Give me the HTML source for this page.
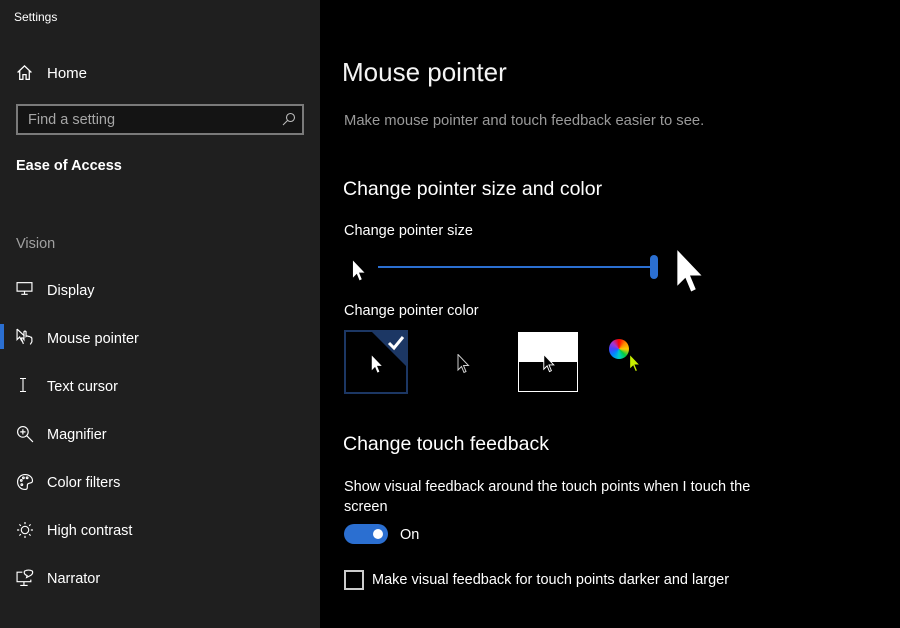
<!DOCTYPE html>
<html><head><meta charset="utf-8"><style>
*{margin:0;padding:0;box-sizing:border-box}
body{width:900px;height:628px;background:#000;font-family:"Liberation Sans",sans-serif;color:#fff;position:relative;overflow:hidden}
.side{position:absolute;left:0;top:0;width:320px;height:628px;background:#1f1f1f}
.a{position:absolute;white-space:nowrap}
.nav{position:absolute;left:47px;font-size:14.5px}
.ic{position:absolute;left:16px}
</style></head><body>
<div class="side">
<div class="a" style="left:14px;top:10px;font-size:12px">Settings</div>
<svg class="ic" style="top:64px" width="17" height="17" viewBox="0 0 16 16" fill="none" stroke="#fff" stroke-width="1.2"><path d="M1.5 8 L8 1.8 L14.5 8 M3.5 6.2 V14.5 H6.5 V10 H9.5 V14.5 H12.5 V6.2"/></svg>
<div class="nav" style="top:65px;font-size:15px">Home</div>
<div class="a" style="left:16px;top:104px;width:288px;height:31px;border:2px solid #7a7a7a;background:#141414"></div>
<div class="a" style="left:28px;top:112px;font-size:14.5px;color:#a6a6a6">Find a setting</div>
<svg class="a" style="left:282px;top:112px" width="14" height="14" viewBox="0 0 14 14" fill="none" stroke="#bbb" stroke-width="1.1"><circle cx="8.5" cy="5.5" r="4"/><path d="M5.5 8.5 L1 13"/></svg>
<div class="a" style="left:16px;top:158px;font-size:14.5px;font-weight:bold">Ease of Access</div>
<div class="a" style="left:16px;top:236px;font-size:14.5px;color:#a0a0a0">Vision</div>
<svg class="ic" style="top:281px" width="17" height="15" viewBox="0 0 16 14" fill="none" stroke="#fff" stroke-width="1.1"><rect x="1" y="1.5" width="14" height="8"/><path d="M8 9.5 V12 M5 12.5 H11"/></svg>
<div class="nav" style="top:283px">Display</div>
<div class="a" style="left:0;top:324px;width:4px;height:25px;background:#2b6fd1"></div>
<svg class="ic" style="top:328px" width="18" height="18" viewBox="0 0 17 17" fill="none" stroke="#fff" stroke-width="1.1"><path d="M1 1 V11 L3.5 8.5 L5.5 12.5 M1 1 L8 7.5"/><path d="M7 15 L5 10 Q5 9 6.5 9.5 L7.5 11 V3.5 Q8.5 2.5 9.5 3.5 V8 Q10.5 7 11.5 8 Q12.5 7.5 13.5 8.5 Q14.8 8.5 15 10 V13 L13.5 15.5"/></svg>
<div class="nav" style="top:331px">Mouse pointer</div>
<svg class="ic" style="top:377px" width="16" height="16" viewBox="0 0 16 16" fill="none" stroke="#fff" stroke-width="1.1"><path d="M4 1.5 H10 M7 1.5 V14.5 M4 14.5 H10"/></svg>
<div class="nav" style="top:379px">Text cursor</div>
<svg class="ic" style="top:425px" width="18" height="18" viewBox="0 0 17 17" fill="none" stroke="#fff" stroke-width="1.1"><circle cx="6.5" cy="6.5" r="5"/><path d="M10 10 L16 16 M6.5 4 V9 M4 6.5 H9"/></svg>
<div class="nav" style="top:427px">Magnifier</div>
<svg class="ic" style="top:473px" width="18" height="18" viewBox="0 0 17 17" fill="none" stroke="#fff" stroke-width="1.1"><path d="M8.5 1.5 C13 1.5 16 4.5 15.5 8 C15 10 12 9 11 10.5 C10 12 12 15.5 8.5 15.5 C4.5 15.5 1.5 12.5 1.5 8.5 C1.5 4.5 4.5 1.5 8.5 1.5Z"/><circle cx="5" cy="7" r=".8"/><circle cx="7" cy="4.5" r=".8"/><circle cx="10.5" cy="4.5" r=".8"/><circle cx="5.5" cy="11" r=".8"/></svg>
<div class="nav" style="top:475px">Color filters</div>
<svg class="ic" style="top:521px" width="18" height="18" viewBox="0 0 17 17" fill="none" stroke="#fff" stroke-width="1.1"><circle cx="8.5" cy="8.5" r="3.5"/><path d="M8.5 1 V3 M8.5 14 V16 M1 8.5 H3 M14 8.5 H16 M3.2 3.2 L4.6 4.6 M12.4 12.4 L13.8 13.8 M3.2 13.8 L4.6 12.4 M12.4 4.6 L13.8 3.2"/></svg>
<div class="nav" style="top:523px">High contrast</div>
<svg class="ic" style="top:569px" width="18" height="18" viewBox="0 0 17 17" fill="none" stroke="#fff" stroke-width="1.1"><path d="M6 3 H1 V12 H14 V10 M7.5 12 V15 M4 15.5 H11"/><path d="M8 2 Q12 0 15.5 2 Q16.5 5 13 6.5 L10 8 L10.5 6.2 Q7 5 8 2Z"/></svg>
<div class="nav" style="top:571px">Narrator</div>
</div>

<div class="a" style="left:342px;top:57px;font-size:26px;font-weight:300;color:#f4f4f4">Mouse pointer</div>
<div class="a" style="left:344px;top:113px;font-size:14.8px;color:#9a9a9a">Make mouse pointer and touch feedback easier to see.</div>
<div class="a" style="left:343px;top:178px;font-size:19.5px">Change pointer size and color</div>
<div class="a" style="left:344px;top:223px;font-size:14.5px">Change pointer size</div>
<svg class="a" style="left:352px;top:260px" width="14" height="22" viewBox="0 0 12 20"><path d="M0.5 0.5 V16 L4 12.5 L6.5 18.5 L8.5 17.5 L6 11.5 L11 11.5Z" fill="#fff"/></svg>
<div class="a" style="left:378px;top:266px;width:276px;height:2px;background:#2b6fd1"></div>
<div class="a" style="left:650px;top:255px;width:8px;height:24px;border-radius:4px;background:#2b6fd1"></div>
<svg class="a" style="left:674px;top:249px" width="32" height="46" viewBox="0 0 12 20"><path d="M0.5 0.5 V16 L4 12.5 L6.5 18.5 L8.5 17.5 L6 11.5 L11 11.5Z" fill="#fff"/></svg>
<div class="a" style="left:344px;top:303px;font-size:14.5px">Change pointer color</div>
<div class="a" style="left:344px;top:330px;width:64px;height:64px;border:2px solid #1c3764"></div>
<svg class="a" style="left:344px;top:330px" width="64" height="64"><path d="M26 0 H64 V38Z" fill="#1c3764"/><path d="M45 13 L50 18 L59 7" stroke="#fff" stroke-width="3" fill="none"/></svg>
<svg class="a" style="left:371px;top:355px" width="12" height="19" viewBox="0 0 12 20"><path d="M0.5 0.5 V16 L4 12.5 L6.5 18.5 L8.5 17.5 L6 11.5 L11 11.5Z" fill="#fff"/></svg>
<svg class="a" style="left:457px;top:354px" width="13" height="20" viewBox="0 0 12 20"><path d="M0.5 0.5 V16 L4 12.5 L6.5 18.5 L8.5 17.5 L6 11.5 L11 11.5Z" fill="#000" stroke="#ccc" stroke-width="1"/></svg>
<div class="a" style="left:518px;top:332px;width:60px;height:60px;border:1px solid #fff;background:linear-gradient(#fff 50%,#000 50%)"></div>
<svg class="a" style="left:543px;top:354px" width="12" height="19" viewBox="0 0 12 20"><path d="M0.5 0.5 V16 L4 12.5 L6.5 18.5 L8.5 17.5 L6 11.5 L11 11.5Z" fill="#000" stroke="#fff" stroke-width="1"/></svg>
<div class="a" style="left:609px;top:339px;width:20px;height:20px;border-radius:50%;background:conic-gradient(#f00,#f80,#fc0,#0c4,#0cc,#08f,#44f,#a3c,#f00)"></div>
<svg class="a" style="left:629px;top:354px" width="12" height="19" viewBox="0 0 12 20"><path d="M0.5 0.5 V16 L4 12.5 L6.5 18.5 L8.5 17.5 L6 11.5 L11 11.5Z" fill="#c8f000" stroke="#000" stroke-width=".8"/></svg>
<div class="a" style="left:343px;top:433px;font-size:19.5px">Change touch feedback</div>
<div class="a" style="left:344px;top:477px;font-size:14.5px;line-height:20px;white-space:normal;width:440px">Show visual feedback around the touch points when I touch the screen</div>
<div class="a" style="left:344px;top:524px;width:44px;height:20px;border-radius:10px;background:#2b6fd1"></div>
<div class="a" style="left:373px;top:529px;width:10px;height:10px;border-radius:50%;background:#fff"></div>
<div class="a" style="left:400px;top:527px;font-size:14.5px">On</div>
<div class="a" style="left:344px;top:570px;width:20px;height:20px;border:2px solid #ccc"></div>
<div class="a" style="left:372px;top:572px;font-size:14.5px">Make visual feedback for touch points darker and larger</div>
</body></html>
